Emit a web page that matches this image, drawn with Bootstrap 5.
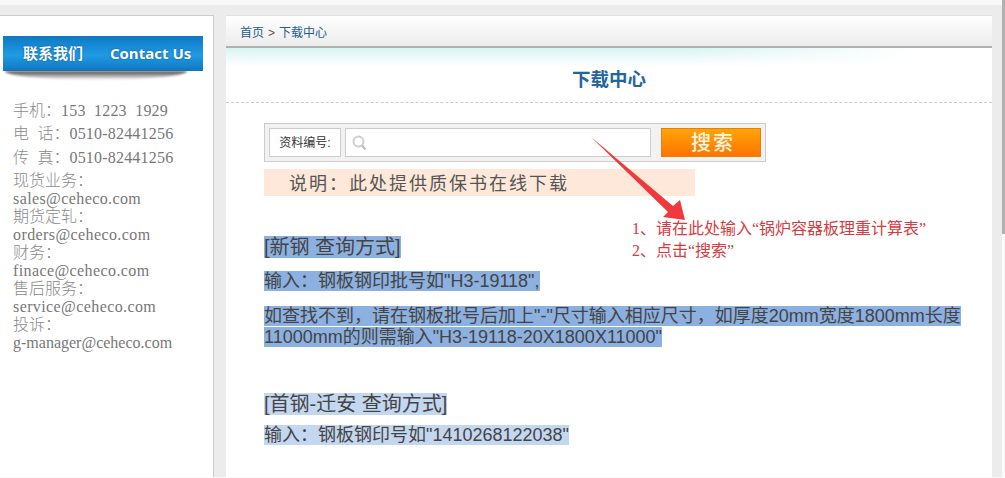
<!DOCTYPE html>
<html lang="zh-CN">
<head>
<meta charset="utf-8">
<title>下载中心</title>
<link href="https://cdn.jsdelivr.net/npm/bootstrap@5.3.0/dist/css/bootstrap.min.css" rel="stylesheet">
<style>
html,body{height:478px;overflow:hidden;}
body{background:#fbfbfb;font-family:"Liberation Sans","Noto Sans CJK SC",sans-serif;color:#555;position:relative;}
.top-strip{height:5px;background:#f8f8f8;width:1002px;}
.page-wrap{height:472px;width:1002px;background:#ececec;padding:10px 10px 0 0;gap:12px;}
.side-panel{width:214px;background:#fff;border-top:1px solid #ccc;border-right:1px solid #ccc;padding-top:20px;flex:none;}
.contact-banner{margin-left:3px;width:200px;height:35px;background:linear-gradient(#0f78c4 0%,#1f9be4 55%,#0e77c2 100%);color:#fff;font-weight:700;padding-left:20px;gap:27px;font-size:15px;font-family:"Open Sans","Noto Sans CJK SC",sans-serif;text-shadow:0 0 2px rgba(0,40,90,.6);}
.contact-banner .cn{font-size:15px;}
.banner-shadow{margin-left:5px;width:182px;height:9px;background:linear-gradient(#4a4a4a,#fff);border-radius:0 0 50% 50%/0 0 100% 100%;filter:blur(1px);}
.contact-list{padding:19px 0 0 13px;font-size:16px;color:#8a8a8a;white-space:nowrap;font-family:"Liberation Serif","Noto Sans CJK SC",serif;font-weight:300;}
.contact-list .big{height:23.4px;line-height:23.4px;}
.contact-list .tight{height:18px;line-height:18px;}
.contact-list .tight-group{padding-top:2.5px;}
.lat{font-family:"Liberation Serif",serif;color:#777;letter-spacing:.2px;}
.lat-mail{font-family:"Liberation Serif",serif;color:#777;letter-spacing:.4px;}
.lat-mail.lat-narrow{letter-spacing:0;}
.main-panel{flex:1;background:#fff;border-top:1px solid #e2e2e2;position:relative;min-width:0;}
.crumb-bar{height:32px;background:linear-gradient(#fff,#ececec);border-bottom:2px solid #b0b0b0;padding:4px 0 0 14px;font-size:12px;}
.crumb-bar .breadcrumb{--bs-breadcrumb-divider:">";--bs-breadcrumb-margin-bottom:0;--bs-breadcrumb-item-padding-x:4px;--bs-breadcrumb-divider-color:#555;}
.crumb-bar a,.crumb-bar .active{color:#1f5f8a;text-decoration:none;}
.title-area{height:55px;border-bottom:1px dashed #ccc;background:linear-gradient(rgba(255,255,255,0),#fff) 0 0/100% 18px no-repeat,linear-gradient(to right,#d6f5f2 60%,#fff 90%) 0 0/100% 18px no-repeat;padding-top:6px;}
.title-text{font-size:18.5px;font-weight:700;color:#22669f;line-height:52px;margin:0;text-align:center;height:42px;}
.content-area{padding:20px 0 0 38px;}
.search-row{width:502px;height:39px;background:#f2f2f2;border:1px solid #ccc;padding:4px;}
.search-label{width:72px;height:29px;background:#fff;border:1px solid #ccc;font-size:12px;color:#333;flex:none;}
.search-field{width:306px;height:29px;background:#fff;border:1px solid #ccc;margin-left:4px;padding-left:6px;flex:none;}
.search-field input{border:0;outline:0;flex:1;min-width:0;background:transparent;}
.search-btn{width:100px;height:29px;margin-left:10px;padding:0 0 0 4px;border:1px solid #e67e10;border-radius:0;background:linear-gradient(#ffa408,#ff7400);color:#fff6e0;font-size:20px;line-height:26px;letter-spacing:2px;font-weight:500;flex:none;}
.note-bar{width:431px;height:27px;margin-top:7px;background:#fde8d9;padding-left:25px;font-size:18px;letter-spacing:2px;line-height:31px;color:#555;}
.sel{background:#8cb0e0;color:#444;}
.sel-light{background:#c4d7f1;color:#444;}
.guide-head{font-size:20px;line-height:23px;margin:0;}
.guide-line{font-size:18px;line-height:21px;margin:0;white-space:nowrap;}
.gap-a{margin-top:40px;}
.gap-b{margin-top:12px;}
.gap-c{margin-top:14px;}
.gap-d{margin-top:45px;}
.gap-e{margin-top:9px;}
.hint-arrow{position:absolute;left:0;top:0;pointer-events:none;}
.hint-text{position:absolute;left:632px;top:218px;font-family:"Liberation Serif","Noto Sans CJK SC",serif;font-size:16px;line-height:21.5px;color:#d93a40;white-space:nowrap;}
.scroll-thumb{position:absolute;right:0;top:0;width:3px;height:234px;background:#b0b0b0;}
</style>
</head>
<body>
<div class="top-strip"></div>
<div class="page-wrap d-flex">
  <aside class="side-panel">
    <div class="contact-banner d-flex align-items-center"><span class="cn">联系我们</span><span>Contact Us</span></div>
    <div class="banner-shadow"></div>
    <div class="contact-list">
      <div class="big">手机&#xFF1A;<span class="lat">153&nbsp;&nbsp;1223&nbsp;&nbsp;1929</span></div>
      <div class="big">电<span class="lat">&nbsp;&nbsp;</span>话&#xFF1A;<span class="lat">0510-82441256</span></div>
      <div class="big">传<span class="lat">&nbsp;&nbsp;</span>真&#xFF1A;<span class="lat">0510-82441256</span></div>
      <div class="tight-group">
        <div class="tight">现货业务&#xFF1A;</div>
        <div class="tight"><span class="lat-mail">sales@ceheco.com</span></div>
        <div class="tight">期货定轧&#xFF1A;</div>
        <div class="tight"><span class="lat-mail">orders@ceheco.com</span></div>
        <div class="tight">财务&#xFF1A;</div>
        <div class="tight"><span class="lat-mail">finace@ceheco.com</span></div>
        <div class="tight">售后服务&#xFF1A;</div>
        <div class="tight"><span class="lat-mail">service@ceheco.com</span></div>
        <div class="tight">投诉&#xFF1A;</div>
        <div class="tight"><span class="lat-mail lat-narrow">g-manager@ceheco.com</span></div>
      </div>
    </div>
  </aside>
  <main class="main-panel">
    <nav class="crumb-bar d-flex align-items-center" aria-label="breadcrumb">
      <ol class="breadcrumb">
        <li class="breadcrumb-item"><a href="#">首页</a></li>
        <li class="breadcrumb-item active" aria-current="page">下载中心</li>
      </ol>
    </nav>
    <div class="title-area"><h1 class="title-text">下载中心</h1></div>
    <div class="content-area">
      <div class="search-row d-flex">
        <div class="search-label d-flex align-items-center justify-content-center">资料编号&#x3A;</div>
        <div class="search-field d-flex align-items-center">
          <svg width="15" height="16" viewBox="0 0 15 16" fill="none" stroke="#cfcfcf" stroke-width="2"><circle cx="6.5" cy="6.5" r="5"/><path d="M10 10.5l3.5 4" stroke="#bbb"/></svg>
          <input type="text" aria-label="资料编号">
        </div>
        <button type="button" class="btn search-btn">搜索</button>
      </div>
      <div class="note-bar">说明&#xFF1A;此处提供质保书在线下载</div>
      <h2 class="guide-head fw-normal gap-a"><span class="sel">[新钢 查询方式]</span></h2>
      <p class="guide-line gap-b"><span class="sel">输入&#xFF1A;钢板钢印批号如"H3-19118",</span></p>
      <p class="guide-line gap-c"><span class="sel">如查找不到&#xFF0C;请在钢板批号后加上"-"尺寸输入相应尺寸&#xFF0C;如厚度20mm宽度1800mm长度</span><br><span class="sel">11000mm的则需输入"H3-19118-20X1800X11000"</span></p>
      <h2 class="guide-head fw-normal gap-d"><span class="sel-light">[首钢-迁安 查询方式]</span></h2>
      <p class="guide-line gap-e"><span class="sel-light">输入&#xFF1A;钢板钢印号如"1410268122038"</span></p>
    </div>
  </main>
</div>
<svg class="hint-arrow" width="1005" height="478" viewBox="0 0 1005 478" aria-hidden="true"><polygon points="591,137 673,206 680,200 685,220 663,217 668,212" fill="#f0393c"/></svg>
<div class="hint-text">1、请在此处输入“锅炉容器板理重计算表”<br>2、点击“搜索”</div>
<div class="scroll-thumb"></div>
</body>
</html>
